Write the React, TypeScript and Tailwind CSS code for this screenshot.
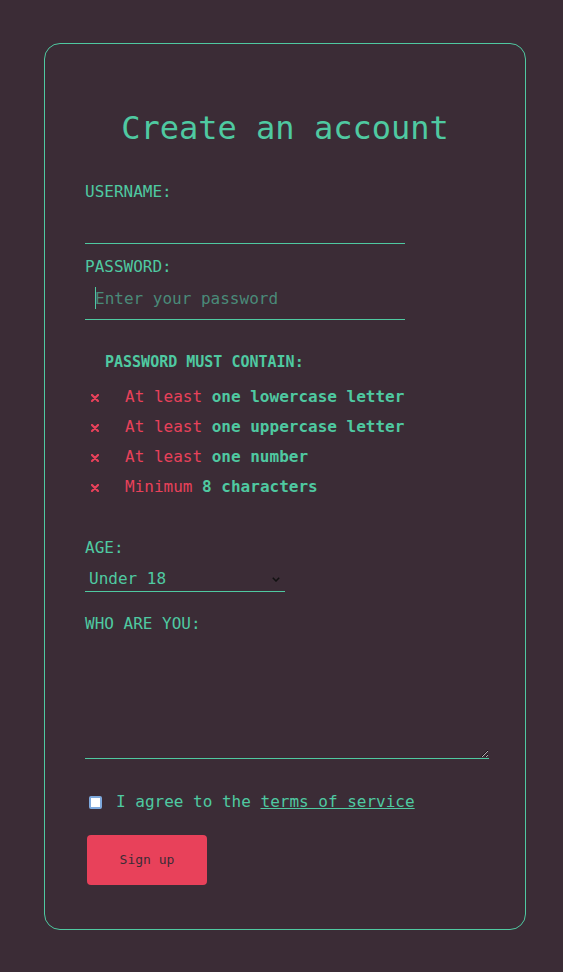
import React, { useState } from "react";

const rules = [
  { lead: "At least", bold: "one lowercase letter" },
  { lead: "At least", bold: "one uppercase letter" },
  { lead: "At least", bold: "one number" },
  { lead: "Minimum", bold: "8 characters" },
];

const Cross = () => (
  <svg width="8" height="8" viewBox="0 0 8 8" className="mt-px">
    <path d="M1 1 L7 7 M7 1 L1 7" stroke="#e8415a" strokeWidth="2.2" strokeLinecap="round" />
  </svg>
);

const App: React.FC = () => {
  const [agreed, setAgreed] = useState(false);

  return (
    <div className="min-h-[972px] bg-[#3b2c36] pt-[43px] font-['DejaVu_Sans_Mono',monospace] text-[#4fc9a1]">
      <form className="ml-[44px] w-[482px] rounded-2xl border border-[#4fc9a1] px-10 pt-[60px] pb-[44px]">
        <h1 className="text-center text-[32px] leading-[48px]">Create an account</h1>

        <label className="mt-[28px] block text-base leading-6">USERNAME:</label>
        <input
          type="text"
          className="block h-[40px] w-[320px] border-b border-[#4fc9a1] px-[10px] outline-none"
        />

        <label className="mt-[11px] block text-base leading-6">PASSWORD:</label>
        <div className="relative w-[320px]">
          <input
            type="password"
            placeholder="Enter your password"
            className="block h-[41px] w-full border-b border-[#4fc9a1] px-[10px] pb-[2px] caret-[#4fc9a1] outline-none placeholder:text-[#4a8a79]"
          />
          {/* fake caret, the field is focused in the shot */}
          <span className="pointer-events-none absolute left-[10px] top-[8px] h-[22px] w-px bg-[#4fc9a1]" />
        </div>

        <h2 className="mt-[31px] pl-5 text-[15px] leading-[22px] font-bold">PASSWORD MUST CONTAIN:</h2>
        <ul className="mt-[9px]">
          {rules.map((r, i) => (
            <li key={i} className="flex h-[30px] items-center text-base">
              <span className="flex w-10 pl-[6px]">
                <Cross />
              </span>
              <span className="whitespace-pre text-[#e8415a]">{r.lead} </span>
              <span className="font-bold">{r.bold}</span>
            </li>
          ))}
        </ul>

        <label className="mt-[34px] block text-base leading-6">AGE:</label>
        <div className="relative mt-[7px] w-[200px]">
          <select className="block h-[25px] w-full appearance-none border-b border-[#4fc9a1] pl-1 text-base outline-none">
            <option>Under 18</option>
            <option>18 - 30</option>
            <option>31 - 50</option>
            <option>Over 50</option>
          </select>
          <svg
            className="pointer-events-none absolute right-[5px] top-[10px]"
            width="8"
            height="5"
            viewBox="0 0 8 5"
            fill="none"
          >
            <path d="M0.8 0.8 L4 4 L7.2 0.8" stroke="#111" strokeWidth="1.5" />
          </svg>
        </div>

        <label className="mt-[20px] block text-base leading-6">WHO ARE YOU:</label>
        <textarea className="mt-px block h-[122px] w-[404px] border-b border-[#4fc9a1] outline-none" />

        <label className="mt-[31px] flex h-6 items-center">
          <input
            type="checkbox"
            checked={agreed}
            onChange={(e) => setAgreed(e.target.checked)}
            className="ml-1 mr-[14px] h-[13px] w-[13px] appearance-none rounded-[2px] border-2 border-[#7ea9dd] bg-white checked:bg-[#4fc9a1]"
          />
          <span className="text-base">
            I agree to the <a href="#" className="underline">terms of service</a>
          </span>
        </label>

        <button
          type="button"
          className="mt-[21px] ml-[2px] block h-[50px] w-[120px] rounded bg-[#e8415a] text-[13px] text-[#3b2c36]"
        >
          Sign up
        </button>
      </form>
    </div>
  );
};

export default App;
